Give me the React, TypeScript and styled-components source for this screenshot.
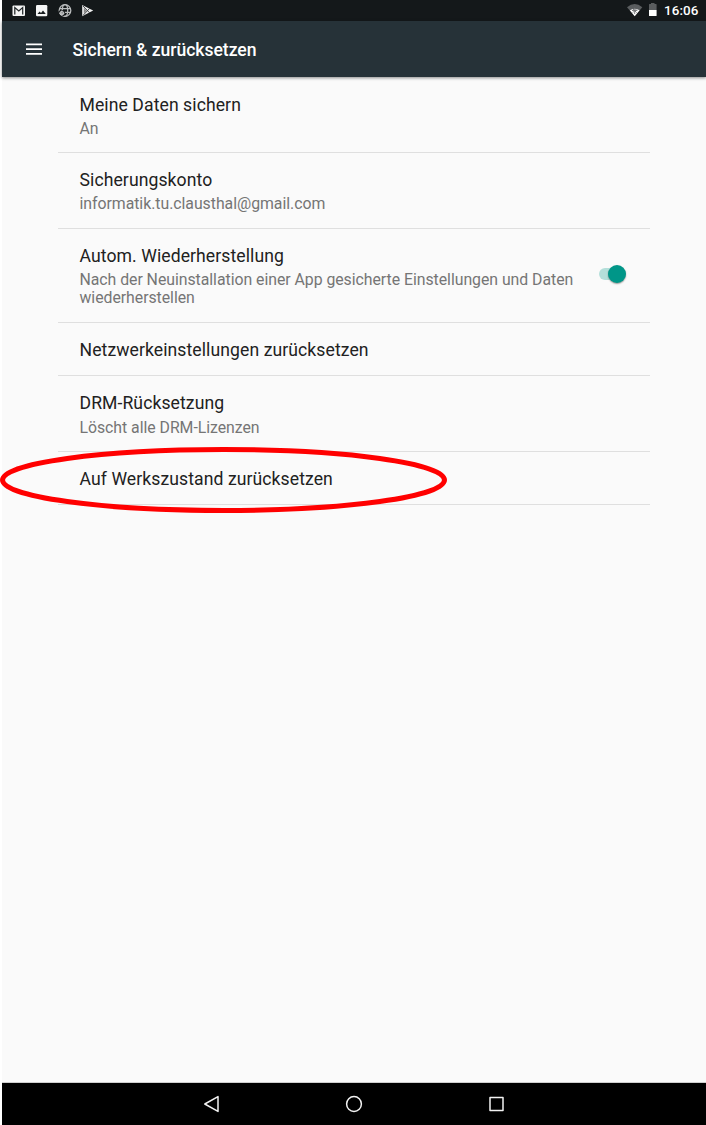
import React from "react";
import styled, { createGlobalStyle } from "styled-components";

const GlobalStyle = createGlobalStyle`
  * { box-sizing: border-box; }
  body { margin: 0; background: #fff; font-family: Roboto, "Liberation Sans", sans-serif; }
`;

const Screen = styled.div`
  position: relative;
  display: flex;
  flex-direction: column;
  width: 706px;
  height: 1125px;
  padding-left: 2px;
  overflow: hidden;
  background: #fff;
`;

const StatusBar = styled.header`
  display: flex;
  flex: none;
  justify-content: space-between;
  height: 21px;
  background: #14181a;
`;

const Toolbar = styled.div`
  display: flex;
  flex: none;
  align-items: center;
  height: 56px;
  padding-left: 23px;
  background: #263238;
  box-shadow: 0 1px 3px rgba(0, 0, 0, 0.45);
  z-index: 1;
`;

const MenuIcon = styled.svg`
  flex: none;
  width: 18px;
  height: 14px;
  margin-right: 29.5px;
`;

const Title = styled.h1`
  margin: 2px 0 0;
  color: #fff;
  font-size: 17.6px;
  font-weight: 500;
  letter-spacing: -0.04px;
  line-height: 22px;
  white-space: nowrap;
`;

const Content = styled.main`
  flex: 1;
  padding: 0 56px;
  background: #fafafa;
  border-bottom: 1px solid #cfcfcf;
`;

const Row = styled.section<{ $height: number }>`
  display: flex;
  align-items: flex-start;
  height: ${(p) => p.$height}px;
  padding: 16px 24px 0 21.5px;
  border-bottom: 1px solid #dfdfdf;

  &:first-child {
    padding-top: 17px;
  }
`;

const Texts = styled.div`
  flex: 1;
  min-width: 0;
`;

const Label = styled.div`
  color: #212121;
  font-size: 17.6px;
  letter-spacing: 0.08px;
  line-height: 22px;
  white-space: nowrap;
`;

const Summary = styled.div<{ $gap: number }>`
  margin-top: ${(p) => p.$gap}px;
  color: #757575;
  font-size: 15.84px;
  letter-spacing: -0.035px;
  line-height: 18.5px;
  white-space: pre;
`;

const Switch = styled.div`
  display: flex;
  align-items: center;
  justify-content: flex-end;
  width: 27px;
  height: 18px;
  margin-top: 20.5px;
`;

const Track = styled.div`
  width: 18px;
  height: 12px;
  margin-right: -9px;
  border-radius: 6px;
  background: #b4dfda;
`;

const Thumb = styled.div`
  width: 18px;
  height: 18px;
  border-radius: 50%;
  background: #009688;
  box-shadow: 0 1px 1.5px rgba(0, 0, 0, 0.4);
`;

const Marker = styled.svg`
  position: absolute;
  left: 0;
  top: 444px;
  width: 450px;
  height: 72px;
  z-index: 2;
`;

const NavBar = styled.nav`
  display: flex;
  flex: none;
  justify-content: center;
  height: 42px;
  background: #000;
`;

const rows = [
  { label: "Meine Daten sichern", summary: "An", height: 76, gap: 4 },
  { label: "Sicherungskonto", summary: "informatik.tu.clausthal@gmail.com", height: 75.5, gap: 4 },
  {
    label: "Autom. Wiederherstellung",
    summary: "Nach der Neuinstallation einer App gesicherte Einstellungen und Daten\nwiederherstellen",
    height: 94,
    gap: 4,
    on: true,
  },
  { label: "Netzwerkeinstellungen zurücksetzen", height: 53.5 },
  { label: "DRM-Rücksetzung", summary: "Löscht alle DRM-Lizenzen", height: 75.5, gap: 5 },
  { label: "Auf Werkszustand zurücksetzen", height: 53.5 },
];

export default function App() {
  return (
    <Screen>
      <GlobalStyle />
      <StatusBar>
        <svg width="100" height="21" viewBox="2 0 100 21">
          <rect x="12.5" y="5.5" width="12.5" height="10.5" rx="1" fill="#f5f5f5" />
          <path d="M14.8 14.6V7.6L18.8 11L22.7 7.6V14.6" fill="none" stroke="#24282a" strokeWidth="1.25" />
          <rect x="36" y="5" width="11.3" height="11.3" rx="1.2" fill="#f5f5f5" />
          <path d="M37.5 14L39.6 11.4L41 13L43 10.5L45.8 14Z" fill="#171b1d" />
          <g fill="none" stroke="#b9bbbc" strokeWidth="1.3">
            <circle cx="65" cy="10.5" r="5.8" />
            <ellipse cx="65" cy="10.5" rx="2.7" ry="5.8" />
            <path d="M59.4 8.6H70.6M59.4 12.4H70.6" />
          </g>
          <circle cx="61.8" cy="13.2" r="3.3" fill="#14181a" />
          <circle cx="61.8" cy="13.2" r="1.7" fill="none" stroke="#c5c7c8" strokeWidth="1.2" />
          <path d="M61.8 10.5V15.9M59.1 13.2H64.5" stroke="#c5c7c8" strokeWidth="1" />
          <path d="M82.2 5L93.2 10.6L82.2 16.2Z" fill="#eee" />
          <path d="M83 6L89.8 13M83 15.4L89.8 8.2" stroke="#34383a" strokeWidth="0.9" />
          <path d="M83.8 7.8L86.8 10.7L83.8 13.5Z" fill="#888" />
        </svg>
        <svg width="84" height="21" viewBox="622 0 84 21">
          <path d="M627 7.2Q634.7 1 642.3 7.2L634.7 16.3Z" fill="#5a5d5f" />
          <path d="M629.8 10.3Q634.7 7.2 639.6 10.3L634.7 16.3Z" fill="#fff" />
          <path d="M634.7 7.7V14M632 10.5H637.4M632.8 8.8L636.6 12.6M636.6 8.8L632.8 12.6" stroke="#707375" strokeWidth="0.9" />
          <path d="M649 4.5Q649 4 649.5 4H651V3H654.5V4H656Q656.6 4 656.6 4.5V10H649Z" fill="#5a5d5f" />
          <path d="M649 10H656.6V15.5Q656.6 16 656 16H649.5Q649 16 649 15.5Z" fill="#fff" />
          <text x="664" y="15.2" fill="#fff" fontFamily="Roboto, sans-serif" fontSize="13.4" fontWeight="500" letterSpacing="0.1">16:06</text>
        </svg>
      </StatusBar>
      <Toolbar>
        <MenuIcon viewBox="0 0 18 14">
          <path d="M1 2.4H17M1 7.1H17M1 11.8H17" stroke="#fff" strokeWidth="1.7" />
        </MenuIcon>
        <Title>Sichern &amp; zurücksetzen</Title>
      </Toolbar>
      <Content>
        {rows.map((row) => (
          <Row key={row.label} $height={row.height}>
            <Texts>
              <Label>{row.label}</Label>
              {row.summary && <Summary $gap={row.gap ?? 4}>{row.summary}</Summary>}
            </Texts>
            {row.on && (
              <Switch>
                <Track />
                <Thumb />
              </Switch>
            )}
          </Row>
        ))}
      </Content>
      <Marker viewBox="0 444 450 72">
        <ellipse cx="223.5" cy="480" rx="221" ry="30.5" fill="none" stroke="#f00" strokeWidth="5" />
      </Marker>
      <NavBar>
        <svg width="320" height="42" viewBox="194 1083 320 42" fill="none" stroke="#f2f2f2" strokeWidth="1.5" strokeLinejoin="round">
          <path d="M204.8 1104L218 1096.6V1111.4Z" />
          <circle cx="354" cy="1104" r="7.4" />
          <rect x="490" y="1097.5" width="13" height="13" />
        </svg>
      </NavBar>
    </Screen>
  );
}
